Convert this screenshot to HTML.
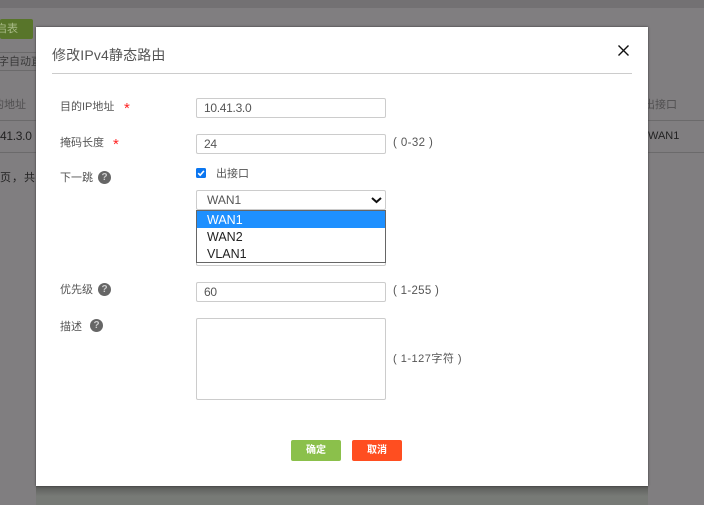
<!DOCTYPE html>
<html><head><meta charset="utf-8">
<style>
*{box-sizing:border-box}
html,body{margin:0;padding:0}
body{width:704px;height:505px;overflow:hidden;position:relative;background:#807e80;font-family:"Liberation Sans","Noto Sans CJK SC",sans-serif;font-size:12px;color:#555}
.a{position:absolute;white-space:nowrap}
.bgt{color:#3a3a3a}
.line{position:absolute;height:1px;background:#6b6a6b}
#modal{position:absolute;left:36px;top:27px;width:612px;height:459px;background:#fff;box-shadow:0 0 2px #333}
.inp{position:absolute;left:160px;width:190px;height:20px;border:1px solid #ccc;border-radius:2px;background:#fff;padding-left:7px;line-height:18px;font-size:12px;color:#555;letter-spacing:-.3px}
.l{position:absolute;left:24px;font-size:11px;line-height:16px;color:#555}
.star{position:absolute;color:#f22;font-size:15px;line-height:16px}
.q{position:absolute;width:13px;height:13px;border-radius:50%;background:#666;color:#ccc;font-size:10px;font-weight:bold;line-height:13px;text-align:center}
.h{position:absolute;left:357px;font-size:11.5px;line-height:16px;color:#555;white-space:nowrap;letter-spacing:.4px}
.opt{height:17px;line-height:19px;padding-left:10px;font-size:12.5px;color:#222}
.btn{position:absolute;top:413px;height:21px;border-radius:2px;color:#fff;font-size:10px;font-weight:bold;line-height:21px;text-align:center}
</style></head>
<body>
<div class="a" style="left:0;top:0;width:704px;height:8px;background:#737173"></div>
<div class="a" style="left:0;top:19px;width:33px;height:20px;background:#58752a;border-radius:2px;color:#a9bb88;font-size:11px;line-height:20px"><span style="position:absolute;left:-4px">启表</span></div>
<div class="a bgt" style="left:0;top:54px;font-size:11px;line-height:16px;width:36px;overflow:hidden"><span style="margin-left:-2px">字自动直</span></div>
<div class="line" style="left:0;top:52px;width:36px"></div>
<div class="line" style="left:0;top:70px;width:36px"></div>
<div class="a" style="left:-7px;top:97px;color:#504f50;line-height:16px;font-size:11px">的地址</div>
<div class="line" style="left:0;top:120px;width:36px"></div>
<div class="a bgt" style="left:0;top:128px;line-height:16px;font-size:12px;color:#222;letter-spacing:-.3px">41.3.0</div>
<div class="line" style="left:0;top:152px;width:36px"></div>
<div class="a bgt" style="left:0;top:170px;line-height:16px;color:#222;font-size:11px;letter-spacing:1px">页，共</div>
<div class="a" style="left:644px;top:97px;color:#504f50;line-height:16px;font-size:11px">出接口</div>
<div class="line" style="left:648px;top:120px;width:56px"></div>
<div class="a" style="left:648px;top:128px;line-height:16px;color:#222;font-size:11px">WAN1</div>
<div class="line" style="left:648px;top:152px;width:56px"></div>
<div class="a" style="left:36px;top:486px;width:612px;height:19px;background:linear-gradient(#5a5b59,#777a76 10px)"></div>

<div id="modal">
  <div class="a" style="left:16px;top:18px;font-size:14px;line-height:20px;color:#555;letter-spacing:.15px">修改IPv4静态路由</div>
  <svg class="a" style="left:581px;top:17px" width="14" height="14" viewBox="0 0 14 14"><path d="M1.5 1.5L11.5 11.5M11.5 1.5L1.5 11.5" stroke="#111" stroke-width="1.4" fill="none"/></svg>
  <div class="a" style="left:16px;top:46px;width:580px;height:1px;background:#ccc"></div>

  <div class="l" style="top:72px">目的IP地址</div><div class="star" style="left:88px;top:74px">*</div>
  <div class="inp" style="top:71px">10.41.3.0</div>

  <div class="l" style="top:108px">掩码长度</div><div class="star" style="left:77px;top:110px">*</div>
  <div class="inp" style="top:107px">24</div>
  <div class="h" style="top:108px">( 0-32 )</div>

  <div class="l" style="top:143px">下一跳</div><div class="q" style="left:62px;top:144px">?</div>
  <svg class="a" style="left:160px;top:141px" width="10" height="10" viewBox="0 0 10 10"><rect width="10" height="10" rx="1.5" fill="#0b76f0"/><path d="M2.2 5.2L4.2 7.2L7.9 2.9" stroke="#fff" stroke-width="1.6" fill="none"/></svg>
  <div class="a" style="left:180px;top:139px;line-height:16px;color:#555;font-size:11px">出接口</div>

  <div class="inp" style="top:163px;height:20px;font-size:12px;padding-left:10px;letter-spacing:0">WAN1
    <svg style="position:absolute;left:174px;top:6px" width="11" height="7" viewBox="0 0 11 7"><path d="M1 1L5.5 5L10 1" stroke="#111" stroke-width="2" fill="none"/></svg>
  </div>
  <div class="inp" style="top:220px;height:19px"></div>
  <div class="a" style="left:160px;top:183px;width:190px;height:53px;background:#fff;border:1px solid #666;overflow:hidden">
    <div class="opt" style="background:#1e90ff;color:#fff">WAN1</div>
    <div class="opt">WAN2</div>
    <div class="opt">VLAN1</div>
  </div>

  <div class="l" style="top:255px">优先级</div><div class="q" style="left:62px;top:256px">?</div>
  <div class="inp" style="top:255px">60</div>
  <div class="h" style="top:256px;letter-spacing:.3px">( 1-255 )</div>

  <div class="l" style="top:292px">描述</div><div class="q" style="left:54px;top:292px">?</div>
  <div class="inp" style="top:291px;height:82px"></div>
  <div class="h" style="top:324px;font-size:11px;letter-spacing:.5px">( 1-127字符 )</div>

  <div class="btn" style="left:255px;width:50px;background:#8bc04b">确定</div>
  <div class="btn" style="left:316px;width:50px;background:#ff4e20">取消</div>
</div>
</body></html>
